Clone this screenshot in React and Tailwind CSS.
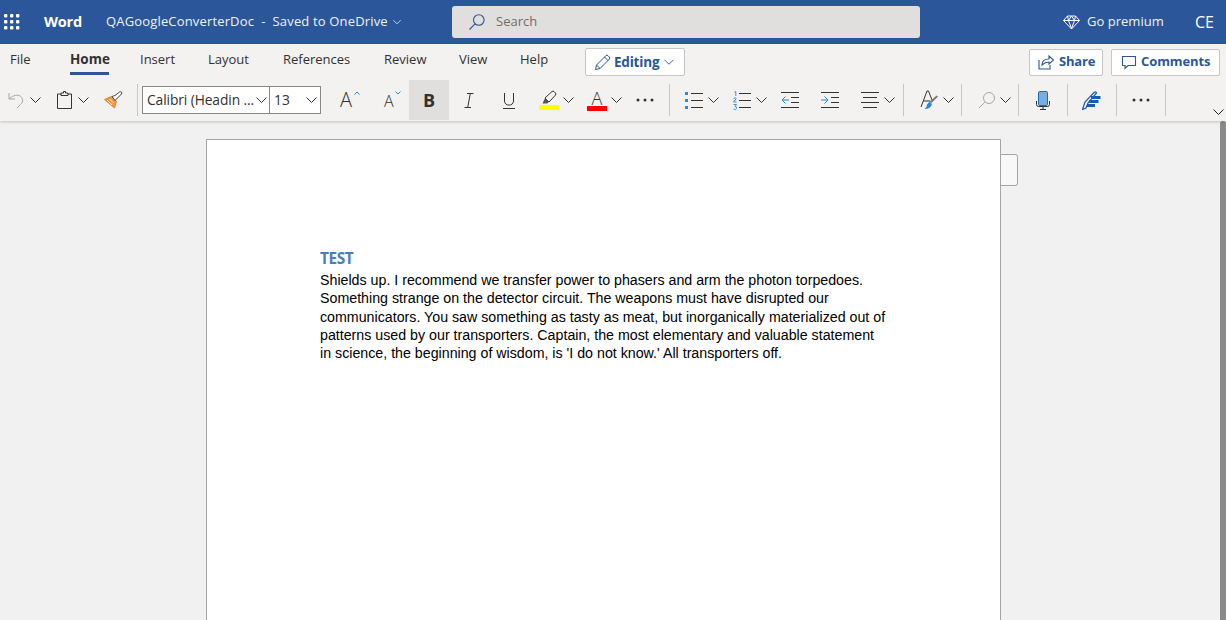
import React from "react";

const ui = "font-['Open_Sans',sans-serif]";

function Chevron({ className = "", color = "#333" }) {
  return (
    <svg width="11" height="6" viewBox="0 0 11 6" fill="none" className={className}>
      <path d="M.5.5l5 5 5-5" stroke={color} strokeWidth="1" />
    </svg>
  );
}

function Sep({ className = "" }) {
  return <div className={"w-px h-[32px] bg-[#c8c6c4] shrink-0 " + className} />;
}

function Lines({ d, color = "#333" }) {
  return <path d={d} stroke={color} strokeWidth="1" fill="none" />;
}

function Dots({ className = "" }) {
  return (
    <svg width="18" height="4" viewBox="0 0 18 4" className={"shrink-0 " + className}>
      <circle cx="2" cy="2" r="1.5" fill="#333" />
      <circle cx="9" cy="2" r="1.5" fill="#333" />
      <circle cx="16" cy="2" r="1.5" fill="#333" />
    </svg>
  );
}

function TopBar() {
  return (
    <div className={"h-[44px] bg-[#2b579a] flex items-center text-white shrink-0 " + ui}>
      <svg width="16" height="16" viewBox="0 0 16 16" className="ml-[4px] shrink-0" fill="#fff">
        {[1, 7, 13].map((y) =>
          [1, 7, 13].map((x) => <rect key={x + "-" + y} x={x - 1} y={y - 1} width="3.4" height="3.4" rx="1" />)
        )}
      </svg>
      <div className="ml-[24px] w-[62px] text-[14.5px] font-bold tracking-[-0.2px]">Word</div>
      <div className="text-[13px] tracking-[0.16px] text-[#eef2f8] whitespace-pre w-[286px]">
        QAGoogleConverterDoc  -  Saved to OneDrive
      </div>
      <Chevron color="#fff" className="ml-[1px] w-[8px]" />
      <div className="ml-[51px] w-[468px] h-[32px] bg-[#e1dfdd] rounded-[3px] flex items-center">
        <svg width="18" height="18" viewBox="0 0 18 18" fill="none" className="ml-[16px]">
          <circle cx="10.8" cy="7" r="5.3" stroke="#2b579a" strokeWidth="1.1" />
          <path d="M7 10.8L1.5 16.5" stroke="#2b579a" strokeWidth="1.1" />
        </svg>
        <span className="ml-[10px] text-[13px] text-[#6f6d6b]">Search</span>
      </div>
      <svg width="17" height="15" viewBox="0 0 17 15" fill="none" className="ml-[143px]">
        <path d="M4.5 1h8l4 4.5-8 8.500-8-8.500zM.5 5.500h16M5.500 5.500l3 8 3-8M4.500 1l1 4.500 3-4.500 3 4.500 1-4.500" stroke="#fff" strokeWidth="1" />
      </svg>
      <div className="ml-[7px] text-[13px] w-[88px] text-[#eef2f8] tracking-[0.02px]">Go premium</div>
      <div className="ml-[20px] text-[16px] font-normal">CE</div>
    </div>
  );
}

function TabRow() {
  return (
    <div className={"h-[36px] flex items-center relative text-[#323130] text-[13px] " + ui}>
      <div className="ml-[10px] w-[60px] mb-[5px]">File</div>
      <div className="w-[70px] relative font-bold text-[13.500px] text-[#323130] mb-[5px]">
        <span>Home</span>
        <div className="absolute left-0 top-[23px] w-[39px] h-[3px] bg-[#2b579a]" />
      </div>
      <div className="w-[68px] mb-[5px]">Insert</div>
      <div className="w-[75px] mb-[5px]">Layout</div>
      <div className="w-[101px] mb-[5px]">References</div>
      <div className="w-[75px] mb-[5px]">Review</div>
      <div className="w-[61px] mb-[5px]">View</div>
      <div className="w-[65px] mb-[5px]">Help</div>
      <div className="w-[100px] h-[28px] bg-white border border-[#c8c6c4] rounded-[2px] flex items-center text-[#2b579a] font-bold text-[13.500px]">
        <svg width="17" height="17" viewBox="0 0 17 17" fill="none" className="ml-[8px]">
          <path d="M1.500 15.500l1-4.500L12 1.500q1-.8 2 .2l1.300 1.300q1 1 .2 2L6 14.500zM2.500 11l3.500 3.500M10.500 3l3.500 3.500" stroke="#2b579a" strokeWidth="1" />
        </svg>
        <span className="ml-[3px] tracking-[-0.2px]">Editing</span>
        <Chevron color="#2b579a" className="ml-[5px] w-[10px]" />
      </div>
      <div className="ml-[344px] w-[74px] h-[27px] bg-white border border-[#c8c6c4] rounded-[2px] flex items-center text-[#2b579a] font-bold text-[13px]">
        <svg width="16" height="16" viewBox="0 0 16 16" fill="none" className="ml-[8px]">
          <path d="M1 6v9h11v-4M4 11c0-4 3-6 7-6V2l4.500 4-4.500 4V8C8 8 6 9 4 11z" stroke="#2b579a" strokeWidth="1.100" />
        </svg>
        <span className="ml-[5px] tracking-[-0.2px]">Share</span>
      </div>
      <div className="ml-[8px] w-[109px] h-[27px] bg-white border border-[#c8c6c4] rounded-[2px] flex items-center text-[#2b579a] font-bold text-[13px]">
        <svg width="16" height="16" viewBox="0 0 16 16" fill="none" className="ml-[9px]">
          <path d="M1.500 2.500h13v9H7l-3 3v-3H1.500z" stroke="#2b579a" strokeWidth="1.100" />
        </svg>
        <span className="ml-[4px] tracking-[-0.1px]">Comments</span>
      </div>
    </div>
  );
}

function Toolbar() {
  return (
    <div className={"h-[40px] flex items-center text-[#323130] " + ui}>
      {/* undo */}
      <svg width="17" height="18" viewBox="0 0 17 18" fill="none" className="ml-[8px] shrink-0">
        <path d="M1 2v6h6M1 8c3-3 7-4.500 10-3.500 4 1.500 5 6 1.500 9L9 17" stroke="#a8a6a4" strokeWidth="1" />
      </svg>
      <Chevron className="ml-[5px] shrink-0" />
      {/* clipboard */}
      <svg width="15" height="18" viewBox="0 0 15 18" fill="none" className="ml-[16px] shrink-0">
        <path d="M4 3H.5v14.500h14V3H11M4 4.500V2h2.500V.5h2V2H11v2.500z" stroke="#333" strokeWidth="1" />
      </svg>
      <Chevron className="ml-[6px] shrink-0" />
      {/* format painter */}
      <svg width="19" height="18" viewBox="0 0 19 18" fill="none" className="ml-[15px] shrink-0">
        <path d="M.5 8.500l7-3 5 5-2 6.500z" fill="#f59b3d" stroke="#d9731a" strokeWidth=".8" />
        <path d="M3 9l5 5M5.500 8l4 4" stroke="#fff" strokeWidth=".8" />
        <path d="M8 5.500l3 4 6.500-6.500c1-1.500-.5-3-2-2L11 4.500z" fill="#fff" stroke="#444" strokeWidth="1" />
      </svg>
      <Sep className="ml-[14px]" />
      {/* font boxes */}
      <div className="ml-[4px] w-[179px] h-[28px] border border-[#8a8886] bg-white flex shrink-0 text-[13.800px]">
        <div className="w-[127px] flex items-center border-r border-[#8a8886] pl-[4px] relative">
          <span className="tracking-[-0.1px] whitespace-nowrap">Calibri (Headin ...</span>
          <Chevron className="absolute right-[2px] top-[10px]" />
        </div>
        <div className="flex-1 flex items-center pl-[4px] relative">
          13
          <Chevron className="absolute right-[3px] top-[10px]" />
        </div>
      </div>
      {/* grow / shrink font */}
      <div className="ml-[19px] w-[19px] h-[20px] relative text-[20px] leading-[20px] font-light shrink-0">
        A
        <svg width="6" height="4" viewBox="0 0 6 4" fill="none" className="absolute -right-[1px] top-[1px]">
          <path d="M.5 3.500L3 1l2.500 2.500" stroke="#2b88d8" strokeWidth="1" />
        </svg>
      </div>
      <div className="ml-[25px] w-[15px] h-[18px] relative text-[16px] leading-[20px] font-light shrink-0">
        A
        <svg width="6" height="4" viewBox="0 0 6 4" fill="none" className="absolute -right-[2px] top-0">
          <path d="M.5.500L3 3 5.500.5" stroke="#2b88d8" strokeWidth="1" />
        </svg>
      </div>
      {/* bold italic underline */}
      <div className="ml-[10px] w-[40px] h-[40px] bg-[#e1dfdd] flex items-center justify-center font-bold text-[18px] shrink-0">B</div>
      <div className="w-[40px] flex justify-center shrink-0">
        <svg width="10" height="15" viewBox="0 0 10 15" fill="none">
          <path d="M3 .5h6.500M.5 14.500H7M6.300.5L3.700 14.500" stroke="#333" strokeWidth="1" />
        </svg>
      </div>
      <div className="w-[40px] flex justify-center shrink-0">
        <svg width="12" height="17" viewBox="0 0 12 17" fill="none">
          <path d="M1.500 1v8c0 5.500 9 5.500 9 0V1" stroke="#333" strokeWidth="1" />
          <path d="M0 16.500h12" stroke="#333" strokeWidth="1" />
        </svg>
      </div>
      {/* highlight */}
      <div className="ml-[10px] w-[20px] h-[20px] flex flex-col items-center shrink-0">
        <svg width="16" height="14" viewBox="0 0 16 14" fill="none">
          <path d="M4 8L11 1.500q1-.8 2 0l1.500 1.500q.8 1 0 2L8 12z" stroke="#333" strokeWidth="1" />
          <path d="M4 8l4 4-2 1.500H1.500z" fill="#555" />
        </svg>
        <div className="w-[20px] h-[5px] mt-[1px] bg-[#ffff00]" />
      </div>
      <Chevron className="ml-[4px] shrink-0" />
      {/* font colour */}
      <div className="ml-[13px] w-[20px] h-[21px] flex flex-col items-center relative shrink-0">
        <span className="text-[18px] leading-[16px] font-light">A</span>
        <div className="w-[20px] h-[5px] absolute bottom-0 bg-[#ff0000]" />
      </div>
      <Chevron className="ml-[4px] shrink-0" />
      <Dots className="ml-[14px]" />
      <Sep className="ml-[15px]" />
      {/* bullets */}
      <svg width="18" height="18" viewBox="0 0 18 18" className="ml-[15px] shrink-0">
        <rect x="0" y="1" width="3" height="3" fill="#2b88d8" />
        <rect x="0" y="8" width="3" height="3" fill="#2b88d8" />
        <rect x="0" y="15" width="3" height="3" fill="#2b88d8" />
        <Lines d="M6 2.500h12M6 9.500h12M6 16.500h12" />
      </svg>
      <Chevron className="ml-[5px] shrink-0" />
      {/* numbering */}
      <svg width="18" height="19" viewBox="0 0 18 19" className="ml-[14px] shrink-0" fill="none">
        <path d="M1.500 1l1.300-.5v4.500" stroke="#2b88d8" strokeWidth=".9" />
        <path d="M.5 7.500q2-1.500 2.800 0L.5 11h3M.5 13.500h3L2 15.500q2 0 1.500 2T.5 18" stroke="#2b88d8" strokeWidth=".9" />
        <Lines d="M6 2.500h12M6 9.500h12M6 16.500h12" />
      </svg>
      <Chevron className="ml-[5px] shrink-0" />
      {/* outdent */}
      <svg width="18" height="18" viewBox="0 0 18 18" className="ml-[14px] shrink-0" fill="none">
        <Lines d="M0 1.500h18M10 6.500h8M10 11.500h8M0 16.500h18" />
        <path d="M8 9H1M4.500 5.500L1 9l3.500 3.500" stroke="#2b88d8" strokeWidth="1" />
      </svg>
      {/* indent */}
      <svg width="18" height="18" viewBox="0 0 18 18" className="ml-[22px] shrink-0" fill="none">
        <Lines d="M0 1.500h18M10 6.500h8M10 11.500h8M0 16.500h18" />
        <path d="M0 9h7M3.500 5.500L7 9l-3.500 3.500" stroke="#2b88d8" strokeWidth="1" />
      </svg>
      {/* align */}
      <svg width="18" height="18" viewBox="0 0 18 18" className="ml-[22px] shrink-0" fill="none">
        <Lines d="M0 1.500h18M2 6.500h14M0 11.500h18M2 16.500h14" />
      </svg>
      <Chevron className="ml-[5px] shrink-0" />
      <Sep className="ml-[8px]" />
      {/* styles */}
      <svg width="19" height="20" viewBox="0 0 19 20" className="ml-[16px] shrink-0" fill="none">
        <path d="M1 17L7 1h1.500L12 10M3.500 11h7" stroke="#333" strokeWidth="1" />
        <path d="M18 6.500L11.500 13 10 11.500l6.500-6z" fill="#777" />
        <path d="M9.500 11.500l2.500 2.500q-1 5-7.500 5 2.500-1.500 2.500-4.500z" fill="#2b88d8" />
      </svg>
      <Chevron className="ml-[4px] shrink-0" />
      <Sep className="ml-[7px]" />
      {/* find */}
      <svg width="18" height="18" viewBox="0 0 18 18" className="ml-[16px] shrink-0" fill="none">
        <circle cx="11" cy="7" r="5.500" stroke="#a8a6a4" strokeWidth="1" />
        <path d="M7 11l-6 6" stroke="#a8a6a4" strokeWidth="1" />
      </svg>
      <Chevron className="ml-[4px] shrink-0" />
      <Sep className="ml-[7px]" />
      {/* dictate */}
      <svg width="14" height="19" viewBox="0 0 14 19" className="ml-[17px] shrink-0" fill="none">
        <rect x="2.500" y=".5" width="9" height="14" rx="1.200" fill="#71afe5" stroke="#106ebe" />
        <path d="M.5 10v3.500q0 2 2 2h9q2 0 2-2V10M7 15.500v2.500M4 18.500h6" stroke="#333" strokeWidth="1" />
      </svg>
      <Sep className="ml-[17px]" />
      {/* editor */}
      <svg width="19" height="19" viewBox="0 0 19 19" className="ml-[14px] shrink-0" fill="none">
        <path d="M.5 18.500L3 11 12 1.500q2-1.500 2.500.5L6 12l-2 5z" stroke="#185abd" strokeWidth="1.200" />
        <path d="M9 6.500h9.500M7 10.500h9.500M5 14.500h8" stroke="#185abd" strokeWidth="2.800" />
      </svg>
      <Sep className="ml-[15px]" />
      <Dots className="ml-[15px]" />
      <Sep className="ml-[15px]" />
      <Chevron className="ml-[47px] mt-[24px] shrink-0" color="#222" />
    </div>
  );
}

export default function App() {
  return (
    <div className="w-[1226px] h-[620px] overflow-hidden flex flex-col bg-[#f1f1f1]">
      <TopBar />
      <div className="h-[77px] bg-[#f3f2f1] shadow-[0_1px_3px_rgba(0,0,0,0.2)] relative z-10 shrink-0">
        <TabRow />
        <Toolbar />
      </div>
      <div className="flex-1 relative overflow-hidden flex items-start pt-[18px] pl-[206px]">
        <div className="w-[795px] h-[600px] shrink-0 bg-white border border-[#a6a6a6] pl-[113px] pt-[108px]">
          <div className="font-['Open_Sans',sans-serif] font-bold text-[#4a7ebb] text-[15.500px] leading-[20px] tracking-[-0.5px]">TEST</div>
          <p className="mt-[3px] font-['Liberation_Sans',Arial,sans-serif] text-[14.220px] leading-[18.250px] text-black whitespace-nowrap">
            Shields up. I recommend we transfer power to phasers and arm the photon torpedoes.<br />
            Something strange on the detector circuit. The weapons must have disrupted our<br />
            communicators. You saw something as tasty as meat, but inorganically materialized out of<br />
            patterns used by our transporters. Captain, the most elementary and valuable statement<br />
            in science, the beginning of wisdom, is 'I do not know.' All transporters off.
          </p>
        </div>
        <div className="w-[17px] h-[32px] mt-[15px] bg-[#f8f8f8] border border-l-0 border-[#a6a6a6] rounded-r-[3px] shrink-0" />
        {/* scrollbar */}
        <div className="absolute right-0 top-0 w-[6px] h-full bg-[#8a8a8a] rounded-t-[3px]" />
      </div>
    </div>
  );
}
